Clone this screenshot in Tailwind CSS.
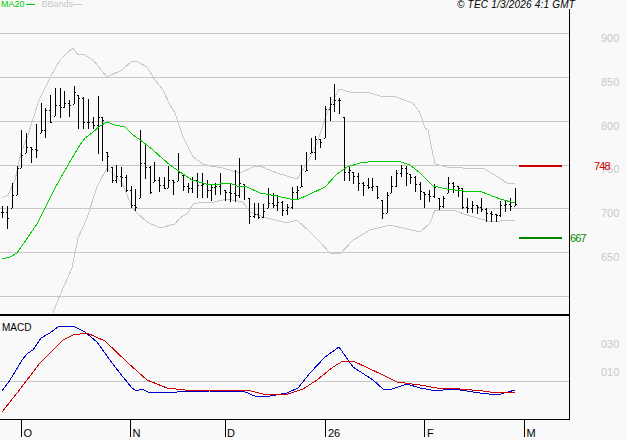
<!DOCTYPE html>
<html lang="en">
  <head>
    <meta charset="UTF-8" />
    <title>TEC chart</title>
    <script src="https://cdn.jsdelivr.net/npm/@tailwindcss/browser@4"></script>
  </head>
  <body class="bg-[#f9f9f9]">
    <div class="w-[627px] h-[440px] overflow-hidden font-['Liberation_Sans',sans-serif]">
      <!-- legend row -->
      <div class="flex items-start h-[9px] text-[9px] leading-[9px]">
        <span class="ml-px text-[#00cc00]">MA20</span>
        <span class="ml-px mt-1 w-[9px] h-px bg-[#00cc00]"></span>
        <span class="ml-[7px] text-[#c8c8c8]">BBands</span>
        <span class="mt-1 w-[9px] h-px bg-[#c8c8c8]"></span>
        <span class="ml-auto mr-[52px] text-[10px] text-black italic tracking-[0.2px]">© TEC 1/3/2026 4:1 GMT</span>
      </div>

      <svg width="627" height="431" viewBox="0 9 627 431" fill="none" shape-rendering="crispEdges" class="block">
        <!-- grid -->
        <path stroke="#c8c8c8" d="M0 33.5H569M0 77.5H569M0 121.5H569M0 165.5H569M0 208.5H569M0 252.5H569M0 296.5H569M0 381.5H569" />

        <!-- bollinger bands -->
        <polyline stroke="#c8c8c8" points="2,198 8,195 15,180 21,153 28,135 39,100 50,78 60,60 67,53 73,48 78,55 83,54 93,60 107,77 122,70 132,61 138,62 147,67 155,80 163,90 170,105 175,113 183,137 193,157 203,164 210,166 223,168 240,173 253,167 260,166 277,173 297,179 307,163 317,143 327,113 339,89 350,92 370,93 380,96 393,96 413,103 420,113 425,128 428,130 432,150 435,164 447,167 463,168 483,168 498,177 507,183 515,184" />
        <polyline stroke="#c8c8c8" points="53,313 60,295 72,268 78,238 87,218 97,187 107,168 122,183 132,207 137,213 147,222 160,228 175,224 180,218 188,213 193,204 203,202 210,203 227,199 243,202 250,212 267,218 287,223 297,220 310,232 320,242 330,253 340,254 353,240 370,230 390,225 407,229 420,232 430,223 435,210 453,210 470,216 492,222 500,221 515,220" />

        <path id="bars" stroke="#000000" />

        <!-- ma20 -->
        <polyline stroke="#00cc00" points="2,259 10,257 17,253 28,237 37,224 45,208 55,188 68,165 71,160 80,145 85,138 92,133 100,126 107,122 115,125 125,127 133,135 143,142 153,150 163,159 170,165 180,172 192,180 210,185 230,183 237,186 247,187 260,193 277,196 290,199 297,200 310,194 325,187 337,174 347,167 360,163 377,161 398,161 410,165 420,173 433,186 447,189 463,191 482,192 500,199 515,203" />

        <!-- last levels -->
        <path stroke="#cc0000" stroke-width="2" d="M519 166H562" />
        <path stroke="#008800" stroke-width="2" d="M519 238H562" />

        <!-- macd -->
        <polyline stroke="#0000cc" points="2,391 8,383 15,372 22,360 28,353 33,350 41,338 50,333 59,326 73,326 85,332 97,342 112,363 123,377 132,388 136,391 142,389 148,392 163,393 177,392 210,391 243,391 257,397 270,396 287,393 298,388 310,373 325,357 339,347 353,367 373,380 383,389 392,389 407,384 420,388 437,391 450,389 460,390 480,393 497,395 508,392 515,390" />
        <polyline stroke="#cc0000" points="2,412 17,393 27,380 40,363 63,340 73,335 87,333 105,341 128,363 147,380 167,388 185,390 210,390 247,390 263,394 288,394 303,389 317,380 333,367 343,361 353,361 383,375 397,382 420,385 437,388 460,389 483,391 490,392 515,392" />

        <!-- frame -->
        <path stroke="#000000" d="M569.5 9V420M0 419.5H570M21.5 419V437M130.5 419V437M225.5 419V437M325.5 419V437M424.5 419V437M524.5 419V437" />
        <path stroke="#000000" stroke-width="2" d="M0 315H569" />

        <!-- labels -->
        <g font-size="11" fill="#c8c8c8" shape-rendering="auto">
          <text x="601" y="42">900</text>
          <text x="601" y="86">850</text>
          <text x="601" y="130">800</text>
          <text x="601" y="173">750</text>
          <text x="601" y="217">700</text>
          <text x="601" y="261">650</text>
          <text x="601" y="348">030</text>
          <text x="601" y="376">010</text>
        </g>
        <text x="594" y="170" font-size="11" fill="#cc0000" letter-spacing="-0.9">748</text>
        <text x="570" y="242" font-size="11" fill="#008800" letter-spacing="-0.9">667</text>
        <text x="2" y="331" font-size="10" fill="#000000">MACD</text>
        <g font-size="11" fill="#000000">
          <text x="23.5" y="437">O</text>
          <text x="132.5" y="437">N</text>
          <text x="227" y="437">D</text>
          <text x="328" y="437">26</text>
          <text x="427" y="437">F</text>
          <text x="526.5" y="437">M</text>
        </g>
      </svg>
    </div>

    <script>
      // x, high, low, close
      const bars = [
        [2,206,218,212],[7,206,229,218],[12,183,208,195],[17,166,195,168],[21,130,168,155],[26,133,153,147],[31,147,163,149],[36,124,158,150],
        [41,103,133,130],[45,108,138,110],[50,95,123,122],[55,88,116,105],[60,88,118,107],[64,91,108,103],[69,100,117,105],[74,86,104,92],
        [78,95,129,98],[83,97,129,122],[88,99,129,122],[93,117,129,125],[98,96,154,117],[102,117,161,120],[107,152,172,156],[112,167,183,180],
        [116,165,183,176],[121,167,187,177],[126,175,192,190],[131,186,208,205],[135,189,211,207],[140,130,198,163],[145,144,179,167],[150,166,194,192],
        [154,162,182,180],[159,177,192,185],[164,177,189,188],[168,166,188,180],[173,180,195,182],[178,153,181,172],[183,175,191,186],[188,183,193,188],
        [192,177,193,180],[197,173,198,185],[202,173,198,184],[207,180,198,190],[211,185,201,187],[215,183,195,186],[220,173,195,183],[225,190,201,192],
        [230,183,202,193],[235,170,202,195],[239,158,198,183],[244,184,200,186],[249,198,224,216],[254,203,218,214],[258,203,219,217],[263,204,218,211],
        [268,188,208,203],[273,193,208,205],[277,195,211,202],[282,201,216,210],[287,204,215,207],[292,187,209,192],[297,186,200,190],[301,165,187,186],
        [306,152,171,170],[311,138,153,152],[315,136,160,139],[320,139,148,142],[325,106,138,109],[330,97,121,104],[334,84,112,100],[339,98,114,100],
        [344,117,181,172],[349,167,181,170],[353,172,184,176],[358,173,191,183],[363,182,196,185],[368,178,189,187],[372,178,191,186],[377,186,199,197],
        [382,200,219,213],[387,192,213,195],[391,176,193,186],[396,170,187,173],[401,165,177,168],[406,166,186,173],[410,174,184,177],[415,176,192,184],
        [420,182,200,191],[424,192,208,194],[429,190,202,196],[434,184,198,187],[439,198,210,206],[443,196,208,198],[448,177,193,183],[453,182,193,186],
        [458,186,197,188],[462,188,209,207],[467,198,213,208],[472,201,213,205],[477,205,214,207],[481,198,212,209],[486,208,222,213],[491,211,222,214],
        [496,214,222,215],[500,201,217,205],[505,201,212,204],[510,198,211,206],[515,188,206,204]
      ];
      let d = "";
      let prev = bars[0][3];
      for (const [x, high, low, close] of bars) {
        const open = Math.min(low, Math.max(high, prev));
        d += `M${x + 0.5} ${high}V${low}`;
        d += `M${x - 1} ${open + 0.5}H${x}`;
        d += `M${x + 1} ${close + 0.5}H${x + 2}`;
        prev = close;
      }
      document.getElementById("bars").setAttribute("d", d);
    </script>
  </body>
</html>
